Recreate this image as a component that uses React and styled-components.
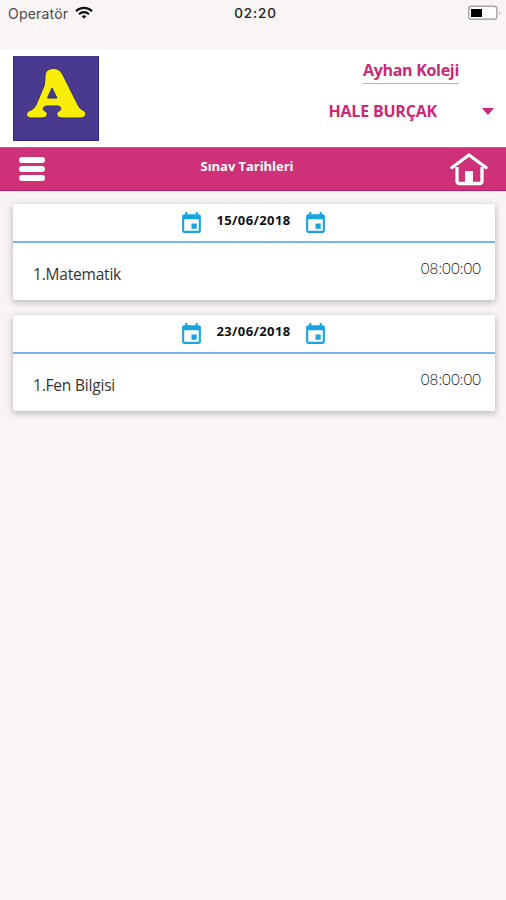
import styled, { createGlobalStyle } from 'styled-components'
import { MdEvent } from 'react-icons/md'

const GlobalStyle = createGlobalStyle`
  * {
    box-sizing: border-box;
  }
  body {
    margin: 0;
    background: #f9f5f4;
    font-family: "Open Sans", "Noto Sans", sans-serif;
  }
`

const Screen = styled.div`
  width: 506px;
  height: 900px;
  overflow: hidden;
  background: #f9f5f4;
`

const StatusBar = styled.div`
  display: grid;
  grid-template-columns: 1fr 60px 1fr;
  align-items: start;
  height: 49px;
  padding: 5px 5px 0 8px;
  font-family: Inter, sans-serif;
  line-height: 17px;
`

const Carrier = styled.div`
  display: flex;
  gap: 7px;
  font-size: 14px;
  letter-spacing: .2px;
  color: #4c4a4a;
  svg {
    margin-top: 1px;
  }
`

const Clock = styled.div`
  padding-left: 2px;
  font-size: 13.5px;
  font-weight: 500;
  letter-spacing: .9px;
  text-align: center;
  white-space: nowrap;
  color: #222;
`

const Battery = styled.svg`
  justify-self: end;
`

const Header = styled.header`
  display: flex;
  justify-content: space-between;
  height: 98px;
  padding: 7px 12px 0 13px;
  background: #fff;
`

const Account = styled.div`
  display: flex;
  flex-direction: column;
  align-items: flex-end;
  color: #cc2876;
  font-weight: 700;
`

const School = styled.div`
  height: 28px;
  margin-right: 35px;
  border-bottom: 1px solid #dfa0bd;
  font-size: 16px;
  line-height: 28px;
  letter-spacing: -.3px;
`

const Student = styled.div`
  display: flex;
  align-items: center;
  gap: 45px;
  height: 22px;
  margin-top: 16px;
  font-size: 16px;
  letter-spacing: -.2px;
`

const Caret = styled.span`
  border: 6.5px solid transparent;
  border-top: 7px solid #cc2876;
  border-bottom: 0;
`

const Toolbar = styled.nav`
  display: grid;
  grid-template-columns: 50px 1fr 50px;
  height: 44px;
  padding: 0 12px;
  background: #ce3177;
  border-top: 1px solid #d04c88;
  border-bottom: 1px solid #c51a68;
`

const MenuButton = styled.button`
  display: flex;
  flex-direction: column;
  gap: 3px;
  width: 26px;
  margin: 9px 0 0 7px;
  padding: 0;
  border: none;
  background: none;
  span {
    height: 6px;
    border-radius: 3px;
    background: #fff;
  }
`

const Title = styled.h1`
  margin: 0;
  padding-right: 12px;
  font-size: 13px;
  font-weight: 700;
  line-height: 37px;
  letter-spacing: -.05px;
  text-align: center;
  color: #fff;
`

const HomeButton = styled.button`
  display: flex;
  justify-self: end;
  padding: 5px 6px 0 0;
  border: none;
  background: none;
`

const ExamList = styled.main`
  display: flex;
  flex-direction: column;
  gap: 15px;
  padding: 13px 11px 0 13px;
`

const Card = styled.section`
  height: 96px;
  border-radius: 2px;
  background: #fff;
  box-shadow: 0 2px 6px 1px rgba(0, 0, 0, .22);
`

const CardDate = styled.div`
  display: flex;
  justify-content: center;
  height: 39px;
  padding: 6px 1px 0 0;
  border-bottom: 2px solid #78b5ea;
  font-size: 13px;
  font-weight: 700;
  line-height: 20px;
  color: #111;
  svg {
    margin-top: 1px;
    color: #18a3e3;
  }
  span {
    width: 99px;
    letter-spacing: .4px;
    text-align: center;
  }
`

const Exam = styled.div`
  display: flex;
  justify-content: space-between;
  padding: 14px 14px 0 20px;
`

const Lesson = styled.div`
  padding-top: 6px;
  font-size: 15.5px;
  line-height: 22px;
  letter-spacing: -.2px;
  color: #333;
`

const Time = styled.div`
  font-family: Lato, sans-serif;
  font-size: 15px;
  font-weight: 300;
  line-height: 22px;
  letter-spacing: .1px;
  color: #111;
`

const exams = [
  { date: '15/06/2018', lesson: '1.Matematik', time: '08:00:00' },
  { date: '23/06/2018', lesson: '1.Fen Bilgisi', time: '08:00:00' },
]

const Wifi = () => (
  <svg width="18" height="14" viewBox="0 0 18 14" fill="none" stroke="#111" strokeWidth="2.2">
    <path d="M1 5.2C5.4.8 12.6.8 17 5.2" />
    <path d="M4 8.3c2.9-2.8 7.1-2.8 10 0" />
    <path d="M6.6 10.2c1.4-1.2 3.4-1.2 4.8 0L9 12.8z" fill="#111" stroke="none" />
  </svg>
)

const Logo = () => (
  <svg width="86" height="85" viewBox="0 0 86 85">
    <path d="M0 0h86v85H0z" fill="#49398f" />
    <path d="M.5 0v84.5h85V0" fill="none" stroke="#30218a" />
    <path
      d="M32 20C32 15 36 12.500 40.500 12.500 45 12.500 48 15 50.500 20L65 49Q67 53 69.500 54C75 56 73 62 68 62H49C43 62 42 56 47 54.500 49 52 47 50 44 50H35C31 50 29 52 31 54.500 36 56 35 62 29 62H18.500C12 62 12 55.500 18 54Q21 53 23 49L31 30Q32 27 32 20ZM39 32L34.500 42H44Z"
      fill="#f7ed08"
      fillRule="evenodd"
      stroke="#352b65"
      strokeWidth="1"
    />
  </svg>
)

const Home = () => (
  <svg width="38" height="34" viewBox="0 0 38 34" fill="none" stroke="#fff">
    <path d="M2 14.500 19 2l17 12.500" strokeWidth="3.400" strokeLinecap="round" strokeLinejoin="round" />
    <path d="M7 14v14q0 2.500 2.500 2.500h20q2.500 0 2.500-2.500V14" strokeWidth="3.300" />
    <path d="M15 31V18h8v13z" fill="#fff" stroke="none" />
  </svg>
)

export default function App () {
  return (
    <Screen>
      <GlobalStyle />
      <StatusBar>
        <Carrier>Operatör <Wifi /></Carrier>
        <Clock>02:20</Clock>
        <Battery width="33" height="16" viewBox="0 0 33 16">
          <rect x=".8" y="1.300" width="28" height="13" rx="2.500" fill="#fff" stroke="#aaa7a6" strokeWidth="1.500" />
          <path d="M3 4h11v8H3z" fill="#000" />
          <path d="M31 6q2 2 0 4z" fill="#aaa7a6" />
        </Battery>
      </StatusBar>
      <Header>
        <Logo />
        <Account>
          <School>Ayhan Koleji</School>
          <Student>HALE BURÇAK <Caret /></Student>
        </Account>
      </Header>
      <Toolbar>
        <MenuButton><span /><span /><span /></MenuButton>
        <Title>Sınav Tarihleri</Title>
        <HomeButton><Home /></HomeButton>
      </Toolbar>
      <ExamList>
        {exams.map(exam => (
          <Card key={exam.date}>
            <CardDate>
              <MdEvent size={25} />
              <span>{exam.date}</span>
              <MdEvent size={25} />
            </CardDate>
            <Exam>
              <Lesson>{exam.lesson}</Lesson>
              <Time>{exam.time}</Time>
            </Exam>
          </Card>
        ))}
      </ExamList>
    </Screen>
  )
}
